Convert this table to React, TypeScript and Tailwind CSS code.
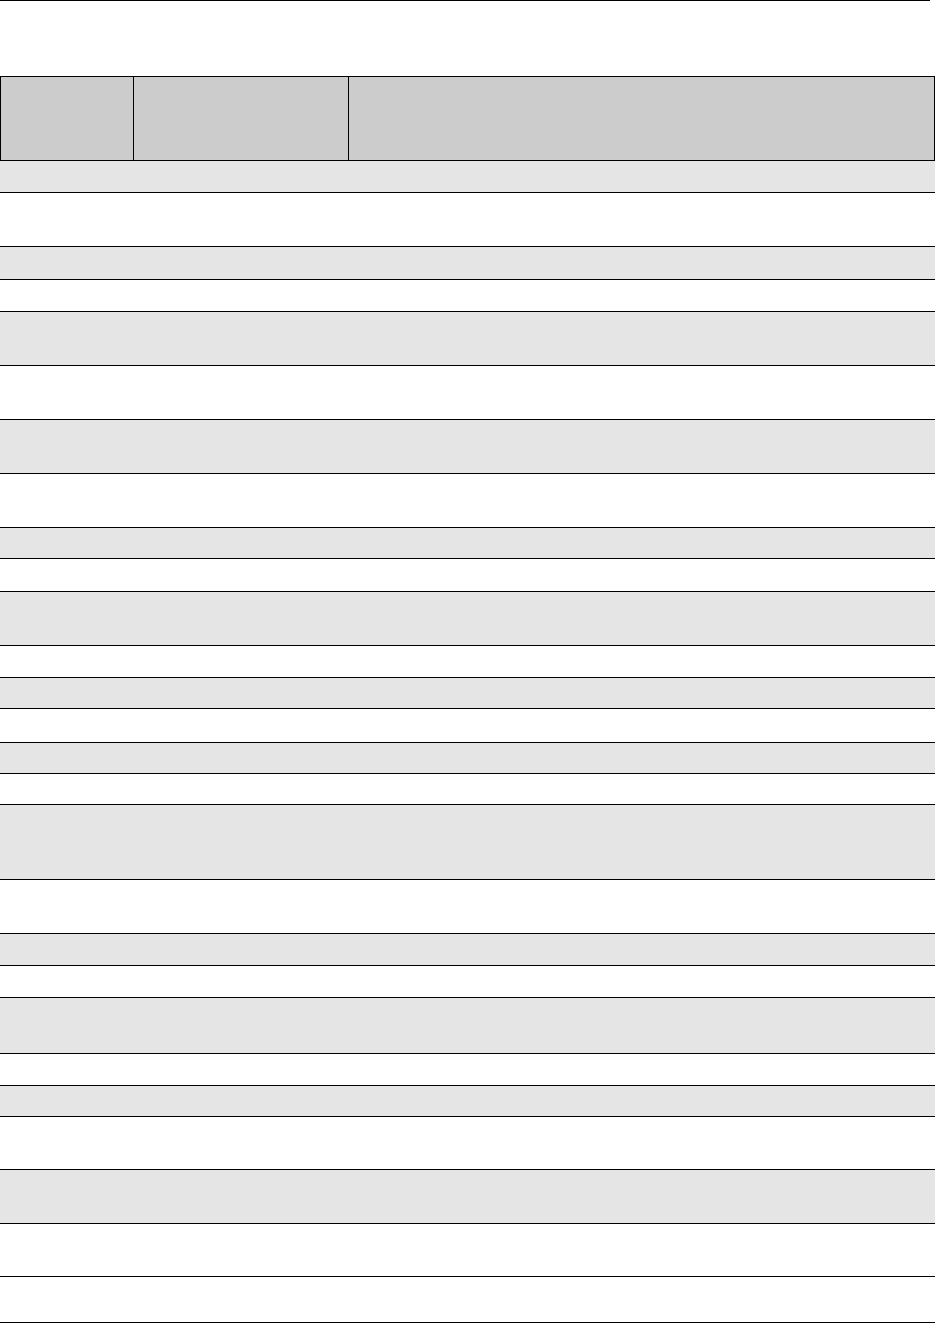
const rowHeights: number[] = [
    32, 54, 33, 32, 54, 54, 54, 54, 31, 33, 54, 32, 31, 34, 31, 31, 75, 54, 32, 32, 56, 32, 31, 53, 54, 53, 46,
];

export default function App() {
    return (
        <div className="w-[936px] min-h-[1324px] bg-white font-['Liberation_Sans',Arial,sans-serif]">
            <div className="h-px w-[930px] bg-black" />
            <div className="mt-[75px] w-[935px]">
                {/* header */}
                <div className="grid h-[85px] grid-cols-[133px_215px_587px] border-y border-black bg-[#cccccc]">
                    <div className="border-l border-black" />
                    <div className="border-l border-black" />
                    <div className="border-x border-black" />
                </div>
                {rowHeights.map((h, i) => {
                    const shaded = i % 2 === 0 && i < 26;
                    return (
                        <div
                            key={i}
                            style={{ height: h }}
                            className={`border-b border-black ${shaded ? 'bg-[#e5e5e5]' : 'bg-white'}`}
                        />
                    );
                })}
            </div>
        </div>
    );
}
